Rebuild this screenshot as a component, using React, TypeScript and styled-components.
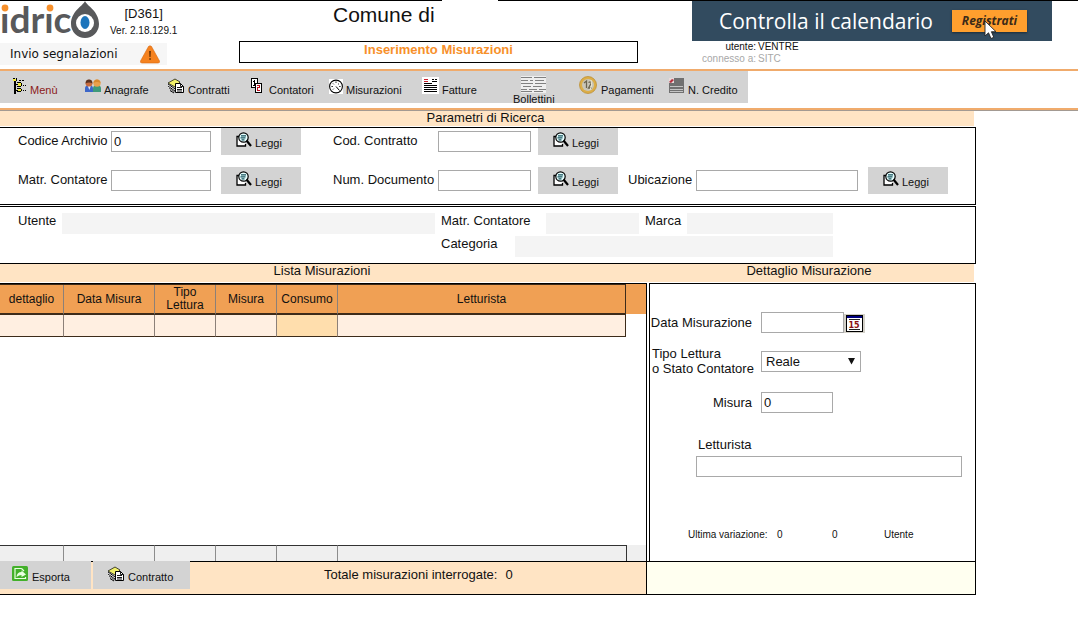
import React from "react";
import styled, { createGlobalStyle } from "styled-components";

const GlobalStyle = createGlobalStyle`
  *, *::before, *::after { box-sizing: border-box; }
  body {
    margin: 0;
    background: #fff;
    color: #111;
    font: 13px/15px "Liberation Sans", Arial, sans-serif;
  }
  button, input, select { font: inherit; color: inherit; margin: 0; border-radius: 0; }
`;

/* ---------- header ---------- */

const TopRule = styled.div`
  display: grid;
  grid-template-columns: 41% 56px 1fr;
  height: 1px;
`;
const RuleSegment = styled.div`
  background: #000;
  &:last-child { grid-column: 3; }
`;
const Header = styled.header`
  display: flex;
  justify-content: space-between;
  height: 70px;
  border-bottom: 2px solid #f0ab6c;
`;
const BrandColumn = styled.div`
  flex: 0 0 239px;
`;
const BrandRow = styled.div`
  display: flex;
  gap: 10px;
  height: 42px;
`;
const Version = styled.div`
  display: flex;
  flex-direction: column;
  align-items: center;
  gap: 4px;
  padding-top: 5px;
`;
const Small = styled.span`
  font-size: 10px;
  line-height: 12px;
`;
const ReportLink = styled.a`
  display: flex;
  align-items: center;
  justify-content: space-between;
  width: 167px;
  height: 22px;
  padding: 0 7px 0 10px;
  background: #f6f6f6;
  color: #111;
  font: 12px/16px "DejaVu Sans", Verdana, sans-serif;
  text-decoration: none;
`;
const TitleColumn = styled.div`
  flex: 0 0 399px;
`;
const Municipality = styled.div`
  height: 40px;
  padding: 2px 0 0 94px;
  font-size: 21px;
  line-height: 24px;
`;
const PageTitle = styled.h1`
  height: 22px;
  margin: 0;
  border: 1px solid #000;
  color: #f7902b;
  font-size: 13px;
  line-height: 16px;
  text-align: center;
`;
const AccountColumn = styled.div`
  flex: 0 0 360px;
  margin-left: auto;
  margin-right: 26px;
`;
const Banner = styled.div`
  position: relative;
  display: flex;
  align-items: center;
  justify-content: space-between;
  height: 40px;
  padding: 0 25px 0 27px;
  background: #324b5f;
  color: #fff;
  font: 21px/28px "Open Sans", sans-serif;
  white-space: nowrap;
`;
const RegisterButton = styled.button`
  width: 75px;
  height: 22px;
  padding: 0;
  border: 0;
  background: #ff9f2e;
  box-shadow: 0 1px 2px #1b2c3a;
  color: #3b2a18;
  font: italic 700 12px/20px "Open Sans", sans-serif;
`;
const Pointer = styled.svg`
  position: absolute;
  left: 292px;
  top: 19px;
`;
const Session = styled.dl`
  display: grid;
  grid-template-columns: 64px 1fr;
  column-gap: 2px;
  margin: 0;
  font-size: 10px;
  line-height: 12px;
  dt { text-align: right; }
  dd { margin: 0; }
`;
const Muted = styled.span`
  color: #a8a8a8;
`;

/* ---------- toolbar ---------- */

const ToolbarBand = styled.div`
  padding-bottom: 5px;
  border-bottom: 2px solid #f0ab6c;
`;
const SectionDivider = styled.div`
  height: 1px;
  background: #a39a92;
`;
const Toolbar = styled.nav`
  display: flex;
  width: 748px;
  max-width: 100%;
  height: 32px;
  padding-left: 13px;
  background: #d3d3d3;
`;
const Tool = styled.button<{ $width: number; $accent?: boolean; $stacked?: boolean }>`
  display: flex;
  flex: 0 0 ${(p) => p.$width}px;
  flex-direction: ${(p) => (p.$stacked ? "column" : "row")};
  align-items: ${(p) => (p.$stacked ? "flex-start" : "flex-end")};
  gap: ${(p) => (p.$stacked ? 0 : 3)}px;
  padding: ${(p) => (p.$stacked ? "5px 0 0" : "0 0 7px")};
  border: 0;
  background: none;
  color: ${(p) => (p.$accent ? "#8b1a1a" : "#111")};
  font-size: 11px;
  line-height: 12px;
  white-space: nowrap;
  svg {
    flex: none;
    margin: ${(p) => (p.$stacked ? "0 0 0 8px" : "0 0 2px")};
  }
`;

/* ---------- shared ---------- */

const Frame = styled.main`
  max-width: 976px;
`;
const SectionBar = styled.div<{ $height: number }>`
  display: grid;
  grid-auto-flow: column;
  grid-template-columns: ${(p) => (React.Children.count(p.children) > 1 ? "647fr 327fr" : "1fr")};
  height: ${(p) => p.$height}px;
  margin: 0 2px 1px 0;
  background: #ffe4c4;
`;
const SectionTitle = styled.h2`
  margin: 0;
  padding-right: 3px;
  font-size: 13px;
  font-weight: 400;
  line-height: 13px;
  text-align: center;
`;
const Field = styled.input<{ $width?: number }>`
  width: ${(p) => (p.$width ? p.$width + "px" : "100%")};
  height: 21px;
  padding: 0 2px;
  border: 1px solid #a9a9a9;
  background: #fff;
`;
const GreyButton = styled.button<{ $height: number; $pad: number }>`
  display: flex;
  align-items: flex-end;
  gap: 3px;
  height: ${(p) => p.$height}px;
  padding: 0 ${(p) => p.$pad}px 6px;
  border: 0;
  background: #d3d3d3;
  font-size: 11px;
  line-height: 12px;
  svg { flex: none; margin-bottom: 1px; }
`;

/* ---------- search ---------- */

const SearchPanel = styled.form`
  display: grid;
  grid-template-columns: 93px 110px 112px 105px 100px 90px 68px 172px 80px;
  row-gap: 12px;
  align-items: center;
  padding: 0 0 10px 18px;
  border: solid #000;
  border-width: 1px 1px 1px 0;
  label { padding-bottom: 2px; }
`;
const CellGap = styled.span`
  grid-column: span 3;
`;
const ReadButton = styled(GreyButton)`
  width: 80px;
`;

/* ---------- customer info ---------- */

const InfoPanel = styled.section`
  display: flex;
  gap: 6px;
  margin-top: 1px;
  padding: 6px 142px 6px 18px;
  border: solid #000;
  border-width: 1px 1px 1px 0;
`;
const InfoColumn = styled.div<{ $basis: number }>`
  display: flex;
  flex: 0 1 ${(p) => p.$basis}px;
  flex-direction: column;
  gap: 2px;
`;
const InfoRow = styled.div`
  display: flex;
`;
const InfoLabel = styled.label<{ $width: number }>`
  flex: 0 0 ${(p) => p.$width}px;
`;
const ReadOnly = styled.output<{ $width?: number }>`
  flex: ${(p) => (p.$width ? `0 0 ${p.$width}px` : "1 1 0")};
  height: 21px;
  margin-right: ${(p) => (p.$width ? 6 : 0)}px;
  background: #f4f4f4;
`;

/* ---------- list and detail ---------- */

const Columns = styled.div`
  display: grid;
  grid-template-columns: minmax(0, 647fr) minmax(0, 329fr);
`;
const ListPanel = styled.section`
  display: flex;
  flex-direction: column;
  justify-content: space-between;
  border: solid #000;
  border-width: 1px 1px 0 0;
`;
const TableRow = styled.div`
  display: flex;
`;
const Table = styled.table`
  flex: 1 1 0;
  table-layout: fixed;
  border-collapse: separate;
  border-spacing: 0;
  border-top: 1px solid #3d2b1a;
  border-right: 1px solid #3d2b1a;
  font-size: 12px;
  line-height: 13px;
  th, td { padding: 0; border-right: 1px solid #8c8078; }
  th:last-child, td:last-child { border-right: 0; }
  th {
    height: 30px;
    border-bottom: 2px solid #3d2b1a;
    background: #f0a054;
    font-weight: 400;
  }
  td {
    height: 22px;
    border-bottom: 1px solid #3d2b1a;
    background: #ffefe1;
  }
  td.total { background: #ffdead; }
`;
const HeadCap = styled.div`
  flex: 0 0 20px;
  height: 30px;
  background: #f0a054;
`;
const TotalsRow = styled.div`
  display: grid;
  grid-template-columns: 64px 91px 61px 61px 61px 1fr;
  height: 16px;
  padding-right: 19px;
  background: #efefef;
`;
const TotalCell = styled.div`
  border-top: 1px solid #333;
  border-right: 1px solid #8c8c8c;
  &:last-child { border-color: #333; }
`;
const DetailPanel = styled.form`
  margin-left: 2px;
  padding: 28px 13px 20px 0;
  border: solid #000;
  border-width: 1px 1px 0 1px;
`;
const DetailGrid = styled.div`
  display: grid;
  grid-template-columns: 102px 1fr;
  grid-template-rows: 21px 30px 27px;
  gap: 13px 9px;
  align-items: center;
  label { text-align: right; }
  label.stacked { padding-left: 2px; text-align: left; white-space: nowrap; }
`;
const DateGroup = styled.div`
  display: flex;
  align-items: flex-end;
`;
const CalendarButton = styled.button`
  display: flex;
  height: 19px;
  padding: 1px 2px;
  border: 0;
  background: #d3d0c8;
`;
const SelectBox = styled.div`
  position: relative;
  width: 100px;
  svg { position: absolute; right: 6px; top: 6px; pointer-events: none; }
`;
const Select = styled.select`
  display: block;
  width: 100%;
  height: 21px;
  padding: 0 4px;
  border: 1px solid #a9a9a9;
  background: #fff;
  appearance: none;
`;
const ReaderGroup = styled.div`
  display: flex;
  flex-direction: column;
  gap: 4px;
  margin: 21px 0 52px;
  padding-left: 46px;
  label { padding-left: 2px; }
`;
const Changes = styled.div`
  display: grid;
  grid-template-columns: 89px 55px 52px 1fr;
  padding-left: 38px;
  font-size: 10px;
  line-height: 12px;
`;

/* ---------- footer ---------- */

const Footer = styled.footer`
  display: grid;
  grid-template-columns: minmax(0, 647fr) minmax(0, 329fr);
`;
const FooterBar = styled.div`
  display: flex;
  align-items: flex-start;
  gap: 2px;
  height: 34px;
  border: solid #000;
  border-width: 1px 1px 1px 0;
  background: #ffe4c4;
  button { margin-top: -1px; }
`;
const FooterButton = styled(GreyButton)<{ $width: number }>`
  flex: 0 0 ${(p) => p.$width}px;
`;
const Total = styled.div`
  display: flex;
  gap: 8px;
  padding: 5px 0 0 132px;
`;
const FooterSide = styled.div`
  border: solid #000;
  border-width: 1px 1px 1px 0;
  background: #fffff0;
`;

/* ---------- drawings ---------- */

const Logo = () => (
  <svg width="100" height="40" viewBox="0 0 100 40" role="img" aria-label="idrico">
    <text x="0" y="32" fill="#58595b" fontFamily="Lato, sans-serif" fontWeight="700" fontSize="37">idric</text>
    <rect x="0" y="0" width="9" height="11" fill="#fff" />
    <rect x="45" y="0" width="10" height="11" fill="#fff" />
    <circle cx="5" cy="7" r="3.4" fill="#f7902b" />
    <circle cx="50" cy="7" r="3.4" fill="#f7902b" />
    <path d="M85 0C83 5 71 10 71 23A14 14 0 0 0 99 23C99 10 87 5 85 0Z" fill="#58595b" />
    <circle cx="85" cy="22" r="9" fill="#fff" />
    <ellipse cx="85" cy="21.500" rx="4.500" ry="6.500" fill="#1c75bc" />
  </svg>
);
const WarningIcon = () => (
  <svg width="20" height="19" viewBox="0 0 20 19" aria-hidden="true">
    <path d="M8.500 1.500Q10 0 11.500 1.500L19.500 16Q20 18 18 18H2Q0 18 .5 16Z" fill="#f5821f" stroke="#d96a10" strokeWidth=".6" />
    <path d="M9.200 6h1.600l-.3 6h-1zM9.300 13.300h1.500v1.500H9.300z" fill="#5a2a00" />
  </svg>
);
const PointerIcon = () => (
  <Pointer width="13" height="20" viewBox="0 0 13 20" aria-hidden="true">
    <path d="M1 1V16L4.500 12.800L7 18.500L9.800 17.300L7.400 11.700H12Z" fill="#fff" stroke="#222" strokeWidth=".9" />
  </Pointer>
);
const MenuIcon = () => (
  <svg width="14" height="16" viewBox="0 0 14 16" shapeRendering="crispEdges" aria-hidden="true">
    <path d="M1 3h2v13H1zM3 6h2v1H3zM3 12h2v1H3z" fill="#000" />
    <path d="M0 0h2v1H0zM3 0h1v3H3zM4 4h4v1H4zM8 5h1v3H8zM4 8h4v1H4zM4 10h4v1H4zM8 11h1v2H8zM4 13h4v1H4z" fill="#000" />
    <path d="M0 1h3v2H0zM5 5h3v3H5zM5 11h3v2H5z" fill="#f4ee38" />
    <path d="M6 2h2v1H6zM9 2h2v1H9zM10 7h1v1h-1zM12 7h1v1h-1zM10 12h1v1h-1zM12 12h1v1h-1z" fill="#000" />
  </svg>
);
const PeopleIcon = () => (
  <svg width="16" height="15" viewBox="0 0 16 15" aria-hidden="true">
    <path d="M0 13V9.500Q0 6 4 6t4 3.500V13z" fill="#3d67c9" />
    <path d="M8 13V9.500Q8 6 12 6t4 3.500V13z" fill="#3f9a7a" />
    <path d="M2.800 7l1.500 4L5.800 7z" fill="#dfe8ff" />
    <circle cx="4" cy="4.200" r="3.400" fill="#c96b3c" />
    <path d="M.6 4.500Q.6 .6 4 .6t3.400 3.900Q4 2.400 .6 4.500z" fill="#5a3322" />
    <circle cx="12" cy="4.200" r="3.600" fill="#eaa04c" />
    <path d="M8.400 4Q9 .4 12 .4t3.600 3.600Q12 2.200 8.400 4z" fill="#d98a2f" />
  </svg>
);
const ContractIcon = () => (
  <svg width="17" height="16" viewBox="0 0 17 16" aria-hidden="true">
    <path d="M0 5L7 1l5 3-5 5z" fill="#f1f06a" stroke="#000" strokeWidth=".7" />
    <path d="M0 6l7 5M0 8l7 5M1 10l6 4M2 12.500l4 2.500" stroke="#000" strokeWidth="1" />
    <path d="M0 7l7 5M0 9l7 5" stroke="#fff" strokeWidth=".5" />
    <path d="M7.500 5.500h5l3 3v6h-8z" fill="#fff" stroke="#000" />
    <path d="M12.500 5.500v3h3M9 9.500h5M9 11.500h5M9 13h5" stroke="#000" strokeWidth=".9" fill="none" />
  </svg>
);
const CounterIcon = () => (
  <svg width="15" height="16" viewBox="0 0 15 16" shapeRendering="crispEdges" aria-hidden="true">
    <path d="M0 0h7v10H0z" fill="#000" />
    <path d="M1 1h5v8H1z" fill="#fff" />
    <path d="M3 2h1v5H3zM2 3h1v1H2zM2 7h3v1H2z" fill="#000" />
    <path d="M4 5h7v10H4z" fill="#000" />
    <path d="M5 6h5v8H5z" fill="#fff" />
    <path d="M6 7h3v3H7v2h2v1H6V9h2V8H6z" fill="#c01020" />
  </svg>
);
const GaugeIcon = () => (
  <svg width="14" height="15" viewBox="0 0 14 15" aria-hidden="true">
    <rect width="14" height="15" fill="#fff" />
    <circle cx="7" cy="7.500" r="6.400" fill="#fff" stroke="#000" strokeWidth="1.100" />
    <path d="M7 2.500v1.300M2.500 7.500h1.300M10.300 7.500h1.200M4 4.500l.8.800M10 4.500l-.8.800M4 10.500l.8-.8M7 7.500l3.500 4" stroke="#000" />
  </svg>
);
const InvoiceIcon = () => (
  <svg width="17" height="17" viewBox="0 0 17 17" shapeRendering="crispEdges" aria-hidden="true">
    <rect width="17" height="17" fill="#fff" />
    <path d="M2 2h4v1H2zM2 4h4v1H2z" fill="#c8202c" />
    <path d="M10 2h2v1h-2zM13 2h2v1h-2zM10 4h5v1h-5zM2 6h8v1H2zM2 8h13v1H2zM2 10h13v1H2zM2 12h13v1H2zM2 14h13v1H2z" fill="#000" />
  </svg>
);
const SlipIcon = () => (
  <svg width="25" height="17" viewBox="0 0 25 17" shapeRendering="crispEdges" aria-hidden="true">
    <rect width="25" height="17" fill="#eee" />
    <path d="M0 1h11v1H0zM13 1h12v1H13zM0 4h7v1H0zM9 4h3v1H9zM14 4h9v1h-9zM0 7h12v1H0zM14 7h11v1H14zM2 10h8v1H2zM12 10h9v1h-9zM0 13h6v1H0zM8 13h8v1H8zM18 13h7v1h-7zM0 15h11v1H0zM13 15h9v1h-9z" fill="#808080" />
  </svg>
);
const CoinIcon = () => (
  <svg width="19" height="18" viewBox="0 0 19 18" aria-hidden="true">
    <circle cx="9" cy="9" r="8.500" fill="#dcae48" stroke="#b98a2b" strokeWidth=".7" />
    <circle cx="9" cy="9" r="6" fill="#c9c6b8" />
    <path d="M5 7l2.500-2v7M9.500 6.500q3-1.500 2.500 1L9.500 12h3" stroke="#6a6450" strokeWidth="1.300" fill="none" />
    <path d="M12 4q2 5-1 10" stroke="#efe9d0" strokeWidth="1" fill="none" />
  </svg>
);
const CreditIcon = () => (
  <svg width="16" height="16" viewBox="0 0 16 16" aria-hidden="true">
    <path d="M3 0h12v15H0V4z" fill="#707070" />
    <path d="M0 0h5v5H0z" fill="#e8dada" />
    <path d="M0 4l3-3 2 1-3 3z" fill="#b5303f" />
    <path d="M1 8.500h13M1 11.500h13M1 13.500h13" stroke="#d9d9d9" strokeWidth=".8" />
  </svg>
);
const SearchIcon = () => (
  <svg width="16" height="16" viewBox="0 0 16 16" aria-hidden="true">
    <path d="M3.500 4.500H1v9.500h8.500V12" fill="#fff" stroke="#000" strokeWidth="1.300" />
    <circle cx="7.500" cy="5.500" r="4.700" fill="#e6ffff" stroke="#000" strokeWidth="1.200" />
    <path d="M5 3.800h5M4.500 5.800h5M5.500 7.800h3" stroke="#14525c" strokeWidth="1.200" />
    <path d="M10.500 8.500L15 14" stroke="#000" strokeWidth="2.200" />
  </svg>
);
const ExportIcon = () => (
  <svg width="17" height="16" viewBox="0 0 17 16" aria-hidden="true">
    <rect width="16" height="15" rx="1.500" fill="#43b02a" />
    <path d="M9.500 2.500H3v10h10.500V11M9.500 2.500L12 5" fill="none" stroke="#e8ffe0" strokeWidth="1.200" />
    <path d="M4.500 11Q5 6 9.500 6V4.500L14 8.500 9.500 11V9Q7 9 4.500 11z" fill="#e8ffe0" />
  </svg>
);
const CalendarIcon = () => (
  <svg width="17" height="17" viewBox="0 0 17 17" shapeRendering="crispEdges" aria-hidden="true">
    <rect width="17" height="17" fill="#000" />
    <rect x="1" y="1" width="15" height="15" fill="#fff" />
    <rect x="1" y="1" width="15" height="2" fill="#000080" />
    <path d="M3 4h11v1H3zM3 14h11v1H3z" fill="#222" />
    <text x="8" y="13" textAnchor="middle" fill="#8b1010" fontFamily="DejaVu Sans, sans-serif" fontWeight="700" fontSize="8">15</text>
  </svg>
);
const ArrowIcon = () => (
  <svg width="7" height="8" viewBox="0 0 7 8" aria-hidden="true">
    <path d="M0 1h7L3.500 7.500z" fill="#111" />
  </svg>
);

const tools = [
  { label: "Menù", width: 72, icon: <MenuIcon />, accent: true },
  { label: "Anagrafe", width: 83, icon: <PeopleIcon /> },
  { label: "Contratti", width: 83, icon: <ContractIcon /> },
  { label: "Contatori", width: 78, icon: <CounterIcon /> },
  { label: "Misurazioni", width: 93, icon: <GaugeIcon /> },
  { label: "Fatture", width: 91, icon: <InvoiceIcon /> },
  { label: "Bollettini", width: 66, icon: <SlipIcon />, stacked: true },
  { label: "Pagamenti", width: 90, icon: <CoinIcon /> },
  { label: "N. Credito", width: 79, icon: <CreditIcon /> },
];

const columns = [
  { label: "dettaglio", width: 64 },
  { label: "Data Misura", width: 91 },
  { label: "Tipo Lettura", width: 61 },
  { label: "Misura", width: 61 },
  { label: "Consumo", width: 61, total: true },
  { label: "Letturista" },
];

const Read = () => (
  <ReadButton type="button" $height={27} $pad={15}>
    <SearchIcon />
    Leggi
  </ReadButton>
);

export default function App() {
  return (
    <>
      <GlobalStyle />
      <TopRule>
        <RuleSegment />
        <RuleSegment />
      </TopRule>
      <Header>
        <BrandColumn>
          <BrandRow>
            <Logo />
            <Version>
              <span>[D361]</span>
              <Small>Ver. 2.18.129.1</Small>
            </Version>
          </BrandRow>
          <ReportLink href="#segnalazioni">
            Invio segnalazioni
            <WarningIcon />
          </ReportLink>
        </BrandColumn>
        <TitleColumn>
          <Municipality>Comune di</Municipality>
          <PageTitle>Inserimento Misurazioni</PageTitle>
        </TitleColumn>
        <AccountColumn>
          <Banner>
            Controlla il calendario
            <RegisterButton type="button">Registrati</RegisterButton>
            <PointerIcon />
          </Banner>
          <Session>
            <dt>utente:</dt>
            <dd>VENTRE</dd>
            <dt><Muted>connesso a:</Muted></dt>
            <dd><Muted>SITC</Muted></dd>
          </Session>
        </AccountColumn>
      </Header>

      <ToolbarBand>
        <Toolbar>
          {tools.map((t) => (
            <Tool key={t.label} type="button" $width={t.width} $accent={t.accent} $stacked={t.stacked}>
              {t.icon}
              {t.label}
            </Tool>
          ))}
        </Toolbar>
      </ToolbarBand>
      <SectionDivider />

      <Frame>
        <SectionBar $height={15}>
          <SectionTitle>Parametri di Ricerca</SectionTitle>
        </SectionBar>
        <SearchPanel>
          <label htmlFor="archivio">Codice Archivio</label>
          <Field id="archivio" $width={100} defaultValue="0" />
          <Read />
          <label htmlFor="contratto">Cod. Contratto</label>
          <Field id="contratto" $width={93} />
          <Read />
          <CellGap />
          <label htmlFor="matricola">Matr. Contatore</label>
          <Field id="matricola" $width={100} />
          <Read />
          <label htmlFor="documento">Num. Documento</label>
          <Field id="documento" $width={93} />
          <Read />
          <label htmlFor="ubicazione">Ubicazione</label>
          <Field id="ubicazione" $width={162} />
          <Read />
        </SearchPanel>

        <InfoPanel>
          <InfoColumn $basis={417}>
            <InfoRow>
              <InfoLabel $width={44} htmlFor="utente">Utente</InfoLabel>
              <ReadOnly id="utente" />
            </InfoRow>
          </InfoColumn>
          <InfoColumn $basis={392}>
            <InfoRow>
              <InfoLabel $width={105} htmlFor="matr">Matr. Contatore</InfoLabel>
              <ReadOnly id="matr" $width={93} />
              <InfoLabel $width={42} htmlFor="marca">Marca</InfoLabel>
              <ReadOnly id="marca" />
            </InfoRow>
            <InfoRow>
              <InfoLabel $width={74} htmlFor="categoria">Categoria</InfoLabel>
              <ReadOnly id="categoria" />
            </InfoRow>
          </InfoColumn>
        </InfoPanel>

        <SectionBar $height={18}>
          <SectionTitle>Lista Misurazioni</SectionTitle>
          <SectionTitle>Dettaglio Misurazione</SectionTitle>
        </SectionBar>

        <Columns>
          <ListPanel>
            <TableRow>
              <Table aria-label="Lista Misurazioni">
                <colgroup>
                  {columns.map((c) => (
                    <col key={c.label} width={c.width} />
                  ))}
                </colgroup>
                <thead>
                  <tr>
                    {columns.map((c) => (
                      <th key={c.label} scope="col">{c.label}</th>
                    ))}
                  </tr>
                </thead>
                <tbody>
                  <tr>
                    {columns.map((c) => (
                      <td key={c.label} className={c.total ? "total" : undefined} />
                    ))}
                  </tr>
                </tbody>
              </Table>
              <HeadCap />
            </TableRow>
            <TotalsRow>
              {columns.map((c) => (
                <TotalCell key={c.label} />
              ))}
            </TotalsRow>
          </ListPanel>

          <DetailPanel>
            <DetailGrid>
              <label htmlFor="data">Data Misurazione</label>
              <DateGroup>
                <Field id="data" $width={83} />
                <CalendarButton type="button" aria-label="Calendario">
                  <CalendarIcon />
                </CalendarButton>
              </DateGroup>
              <label className="stacked" htmlFor="tipo">
                Tipo Lettura
                <br />
                o Stato Contatore
              </label>
              <SelectBox>
                <Select id="tipo" defaultValue="Reale">
                  <option>Reale</option>
                </Select>
                <ArrowIcon />
              </SelectBox>
              <label htmlFor="misura">Misura</label>
              <Field id="misura" $width={72} defaultValue="0" />
            </DetailGrid>
            <ReaderGroup>
              <label htmlFor="letturista">Letturista</label>
              <Field id="letturista" />
            </ReaderGroup>
            <Changes>
              <span>Ultima variazione:</span>
              <span>0</span>
              <span>0</span>
              <span>Utente</span>
            </Changes>
          </DetailPanel>
        </Columns>

        <Footer>
          <FooterBar>
            <FooterButton type="button" $height={28} $pad={12} $width={91}>
              <ExportIcon />
              Esporta
            </FooterButton>
            <FooterButton type="button" $height={28} $pad={15} $width={97}>
              <ContractIcon />
              Contratto
            </FooterButton>
            <Total>
              <span>Totale misurazioni interrogate:</span>
              <span>0</span>
            </Total>
          </FooterBar>
          <FooterSide />
        </Footer>
      </Frame>
    </>
  );
}
